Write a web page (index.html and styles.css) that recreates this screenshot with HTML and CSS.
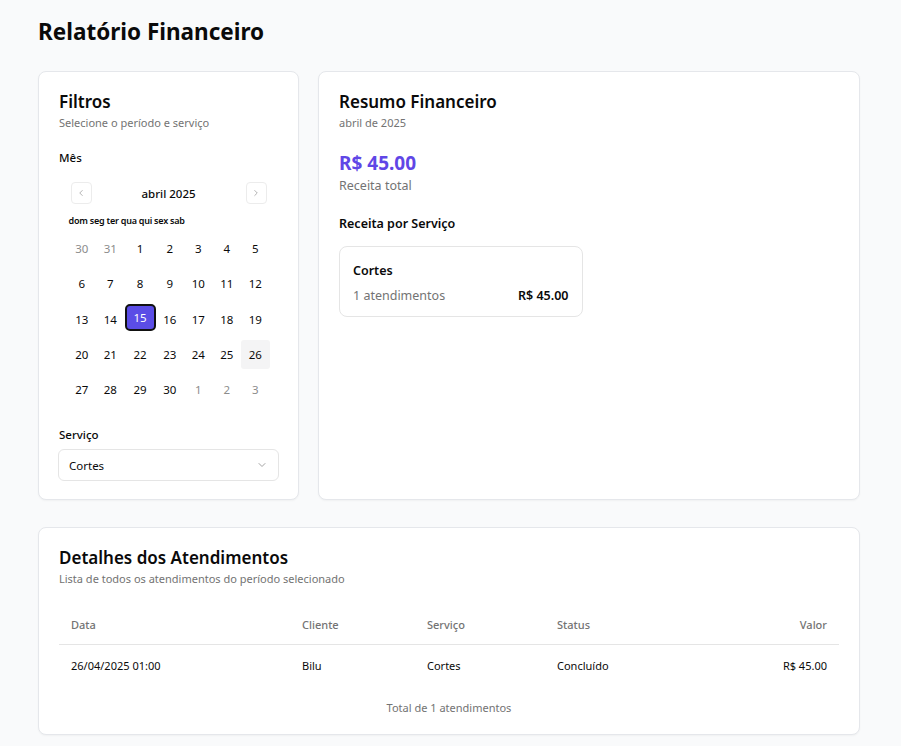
FILE: index.html
```html
<!DOCTYPE html>
<html lang="pt-BR">
<head>
<meta charset="utf-8">
<title>Relatório Financeiro</title>
<link rel="stylesheet" href="styles.css">
</head>
<body>
<div class="page">
  <h1 class="page-title">Relatório Financeiro</h1>

  <div class="top-grid">
    <section class="card filters">
      <div class="card-header">
        <h2 class="card-title">Filtros</h2>
        <p class="card-desc">Selecione o período e serviço</p>
      </div>
      <div class="card-body">
        <div class="field-label">Mês</div>
        <div class="calendar">
          <div class="cal-nav">
            <button class="nav-btn" aria-label="Mês anterior">
              <svg width="10" height="10" viewBox="0 0 24 24" fill="none" stroke="currentColor" stroke-width="2" stroke-linecap="round" stroke-linejoin="round"><path d="m15 18-6-6 6-6"/></svg>
            </button>
            <div class="cal-caption">abril 2025</div>
            <button class="nav-btn" aria-label="Próximo mês">
              <svg width="10" height="10" viewBox="0 0 24 24" fill="none" stroke="currentColor" stroke-width="2" stroke-linecap="round" stroke-linejoin="round"><path d="m9 18 6-6-6-6"/></svg>
            </button>
          </div>
          <div class="weekdays">
            <span>dom</span><span>seg</span><span>ter</span><span>qua</span><span>qui</span><span>sex</span><span>sab</span>
          </div>
          <div class="days">
            <span class="day outside">30</span><span class="day outside">31</span><span class="day">1</span><span class="day">2</span><span class="day">3</span><span class="day">4</span><span class="day">5</span>
            <span class="day">6</span><span class="day">7</span><span class="day">8</span><span class="day">9</span><span class="day">10</span><span class="day">11</span><span class="day">12</span>
            <span class="day">13</span><span class="day">14</span><span class="day selected"><span class="sel-box">15</span></span><span class="day">16</span><span class="day">17</span><span class="day">18</span><span class="day">19</span>
            <span class="day">20</span><span class="day">21</span><span class="day">22</span><span class="day">23</span><span class="day">24</span><span class="day">25</span><span class="day today">26</span>
            <span class="day">27</span><span class="day">28</span><span class="day">29</span><span class="day">30</span><span class="day outside">1</span><span class="day outside">2</span><span class="day outside">3</span>
          </div>
        </div>
        <div class="field-label service-label">Serviço</div>
        <div class="select">
          <span>Cortes</span>
          <svg class="select-chevron" width="12" height="12" viewBox="0 0 24 24" fill="none" stroke="currentColor" stroke-width="2" stroke-linecap="round" stroke-linejoin="round"><path d="m6 9 6 6 6-6"/></svg>
        </div>
      </div>
    </section>

    <section class="card summary">
      <div class="card-header">
        <h2 class="card-title">Resumo Financeiro</h2>
        <p class="card-desc">abril de 2025</p>
      </div>
      <div class="card-body">
        <div class="total-value">R$ 45.00</div>
        <div class="total-label">Receita total</div>
        <h3 class="section-title">Receita por Serviço</h3>
        <div class="service-grid">
          <div class="service-card">
            <div class="service-name">Cortes</div>
            <div class="service-row">
              <span class="service-count">1 atendimentos</span>
              <span class="service-amount">R$ 45.00</span>
            </div>
          </div>
        </div>
      </div>
    </section>
  </div>

  <section class="card details">
    <div class="card-header">
      <h2 class="card-title">Detalhes dos Atendimentos</h2>
      <p class="card-desc">Lista de todos os atendimentos do período selecionado</p>
    </div>
    <div class="card-body">
      <table class="table">
        <thead>
          <tr>
            <th class="col-data">Data</th>
            <th class="col-cliente">Cliente</th>
            <th class="col-servico">Serviço</th>
            <th class="col-status">Status</th>
            <th class="col-valor">Valor</th>
          </tr>
        </thead>
        <tbody>
          <tr>
            <td>26/04/2025 01:00</td>
            <td>Bilu</td>
            <td>Cortes</td>
            <td>Concluído</td>
            <td class="col-valor">R$ 45.00</td>
          </tr>
        </tbody>
      </table>
      <p class="table-footer">Total de 1 atendimentos</p>
    </div>
  </section>
</div>
</body>
</html>
```

FILE: styles.css
```css
* { box-sizing: border-box; }

html, body {
  margin: 0;
  padding: 0;
}

body {
  background: #f9fafb;
  color: #0a0a0a;
  font-family: "Noto Sans", "Open Sans", sans-serif;
}

.page {
  padding: 16px 41px 10px 38px;
}

.page-title {
  margin: 0;
  font-size: 22.5px;
  line-height: 32px;
  font-weight: 700;
}

.top-grid {
  margin-top: 23px;
  display: grid;
  grid-template-columns: 261px 1fr;
  gap: 19px;
}

.card {
  background: #fff;
  border: 1px solid #e5e7eb;
  border-radius: 8px;
  box-shadow: 0 1px 2px rgba(0, 0, 0, 0.04);
}

.card-header {
  padding: 19px 20px 0;
}

.card-title {
  margin: 0;
  font-size: 17px;
  line-height: 22px;
  font-weight: 600;
}

.card-desc {
  margin: 2px 0 0;
  font-size: 11px;
  line-height: 16px;
  color: #737373;
}

.card-body {
  padding: 0 20px 18px;
}

/* Filters */
.field-label {
  margin-top: 20px;
  font-size: 11.5px;
  line-height: 14px;
  font-weight: 500;
}

.calendar {
  width: 202px;
  margin: 17px auto 0;
}

.cal-nav {
  display: flex;
  align-items: center;
  justify-content: space-between;
  padding: 0 3px;
  height: 22px;
}

.nav-btn {
  width: 21px;
  height: 22px;
  padding: 0;
  border: 1px solid #ececec;
  border-radius: 4px;
  background: #fff;
  color: #a3a3a3;
  display: flex;
  align-items: center;
  justify-content: center;
}

.cal-caption {
  font-size: 11.5px;
  font-weight: 500;
}

.weekdays {
  margin-top: 10px;
  display: flex;
  gap: 2px;
  padding-left: 1px;
  font-size: 9px;
  line-height: 14px;
  font-weight: 600;
  letter-spacing: -0.2px;
}

.days {
  margin-top: 6px;
  display: grid;
  grid-template-columns: repeat(7, 1fr);
  grid-auto-rows: 29px;
  row-gap: 6.25px;
}

.day {
  display: flex;
  align-items: center;
  justify-content: center;
  font-size: 11.5px;
  border-radius: 3px;
}

.day.outside {
  color: #8c8c8c;
}

.day.today {
  background: #f4f4f5;
}

.sel-box {
  width: 31px;
  height: 27px;
  margin-top: -3px;
  display: flex;
  align-items: center;
  justify-content: center;
  background: #5b4de6;
  color: #fff;
  border: 2px solid #111;
  border-radius: 5px;
}

.service-label {
  margin-top: 24px;
}

.select {
  margin: 7px -1px 0;
  height: 32px;
  border: 1px solid #e5e5e5;
  border-radius: 6px;
  display: flex;
  align-items: center;
  justify-content: space-between;
  padding: 0 10px 0 10px;
  font-size: 11.5px;
}

.select-chevron {
  color: #a3a3a3;
}

/* Summary */
.total-value {
  margin-top: 18px;
  font-size: 19px;
  line-height: 28px;
  font-weight: 700;
  color: #6046e6;
}

.total-label {
  font-size: 12.5px;
  line-height: 18px;
  color: #737373;
}

.section-title {
  margin: 19px 0 0;
  font-size: 12.5px;
  line-height: 20px;
  font-weight: 600;
}

.service-grid {
  margin-top: 12px;
  display: grid;
  grid-template-columns: 1fr 1fr;
  gap: 13px;
}

.service-card {
  border: 1px solid #e5e5e5;
  border-radius: 8px;
  padding: 14px 13px 10px;
}

.service-name {
  font-size: 12.5px;
  line-height: 20px;
  font-weight: 600;
}

.service-row {
  margin-top: 5px;
  display: flex;
  justify-content: space-between;
  align-items: center;
  font-size: 12.5px;
  line-height: 20px;
}

.service-count {
  color: #737373;
}

.service-amount {
  font-weight: 600;
}

/* Details */
.details {
  margin-top: 27px;
}

.table {
  margin-top: 18px;
  width: 100%;
  border-collapse: collapse;
  font-size: 11px;
}

.table th {
  height: 39px;
  padding: 0 12px;
  text-align: left;
  font-weight: 500;
  color: #737373;
  border-bottom: 1px solid #e5e5e5;
}

.table td {
  height: 42px;
  padding: 0 12px;
}

.col-data { width: 231px; }
.col-cliente { width: 125px; }
.col-servico { width: 130px; }
.col-status { width: 140px; }

.table .col-valor {
  text-align: right;
}

.table-footer {
  margin: 14px 0 0;
  text-align: center;
  font-size: 11px;
  line-height: 16px;
  color: #737373;
}
```
